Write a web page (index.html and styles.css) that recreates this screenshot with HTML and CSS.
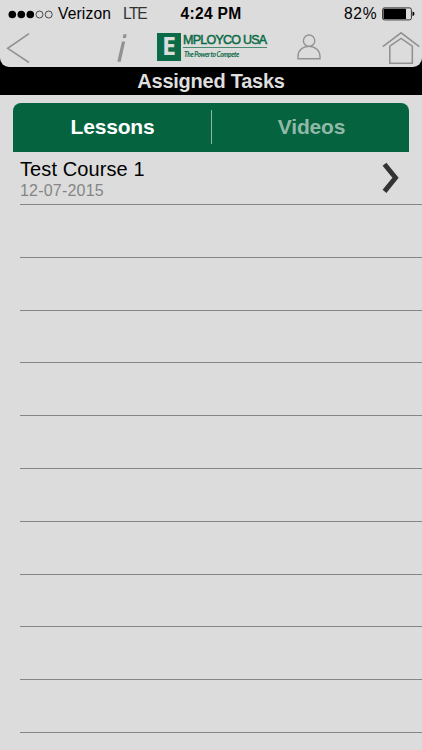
FILE: index.html
```html
<!DOCTYPE html>
<html lang="en">
<head>
<meta charset="utf-8">
<title>Assigned Tasks</title>
<link rel="stylesheet" href="styles.css">
</head>
<body>
<div class="top">
  <header class="head">
    <div class="status">
      <svg class="signal" width="45" height="9" viewBox="0 0 45 9"><g fill="#000"><circle cx="4.3" cy="4.5" r="3.8"/><circle cx="13.3" cy="4.5" r="3.8"/><circle cx="22.3" cy="4.5" r="3.8"/></g><g fill="none" stroke="#222" stroke-width=".8"><circle cx="31.5" cy="4.5" r="3.5"/><circle cx="40.7" cy="4.5" r="3.5"/></g></svg>
      <span class="carrier">Verizon</span>
      <span class="network">LTE</span>
      <span class="time">4:24 PM</span>
      <span class="percent">82%</span>
      <svg class="battery" width="33" height="14" viewBox="0 0 33 14"><rect x=".6" y=".9" width="28.8" height="12" rx="1.8" fill="none" stroke="#222" stroke-width=".9"/><rect x="1.5" y="1.8" width="22.5" height="10.2" rx=".6"/><path d="M30.5 4.4q2 .5 2 2.4t-2 2.4z"/></svg>
    </div>
    <nav class="nav">
      <svg class="back" width="24" height="32" viewBox="0 0 24 32"><path d="M23 1.7 1.7 16.3 23 30.5" fill="none" stroke="#919191" stroke-width="1.6"/></svg>
      <svg class="info" width="11" height="30" viewBox="0 0 11 30"><path d="M6.5.3h3.2L8.9 4.1H5.7zM4.9 7.5h3.3L3.7 27.8H.3z" fill="#929292"/></svg>
      <div class="brand">
        <div class="mark">E</div>
        <div class="words">
          <div class="name">MPLOYCO USA</div>
          <div class="motto">The Power to Compete</div>
        </div>
      </div>
      <svg class="person" width="24" height="28" viewBox="0 0 24 28"><g fill="none" stroke="#929292" stroke-width="1.4"><circle cx="12.1" cy="6.7" r="5.7"/><path d="M1 24.8v-2.4c0-6 4.3-10 10.9-10s11.1 4 11.1 10v2.4z"/></g></svg>
      <svg class="home" width="38" height="34" viewBox="0 0 38 34"><g fill="none" stroke="#929292" stroke-width="1.6"><path d="M.8 15.6 19.1 1.8 37.3 15.6"/><path d="M7.8 15.1 19.1 7.4 30.3 15.1V32.3H7.8z"/></g></svg>
    </nav>
  </header>
  <h1 class="title"><span>Assigned Tasks</span></h1>
</div>
<div class="tabs">
  <div class="tab active"><span class="lessons">Lessons</span></div>
  <div class="tab"><span class="videos">Videos</span></div>
</div>
<main class="list">
  <div class="row">
    <div class="course">
      <div class="course-name">Test Course 1</div>
      <div class="date">12-07-2015</div>
    </div>
    <svg class="chevron" width="18" height="32" viewBox="0 0 18 32"><path d="M2.5 2.2 13.5 15.8 2.5 29.4" fill="none" stroke="#333" stroke-width="4.9"/></svg>
  </div>
  <div class="row"></div>
  <div class="row"></div>
  <div class="row"></div>
  <div class="row"></div>
  <div class="row"></div>
  <div class="row"></div>
  <div class="row"></div>
  <div class="row"></div>
  <div class="row"></div>
  <div class="row"></div>
</main>
</body>
</html>
```
FILE: styles.css
```css
* { box-sizing: border-box; }
body {
  margin: 0;
  height: 750px;
  overflow: hidden;
  background: #dcdcdc;
  font-family: "Liberation Sans", Arial, sans-serif;
  color: #000;
}
svg { display: block; flex: none; }
.top { background: #000; }
.head {
  height: 67px;
  background: #dcdcdc;
  border-radius: 0 0 9px 9px;
}
.status {
  display: flex;
  align-items: center;
  height: 28px;
  padding-left: 8px;
  font-size: 15.6px;
  line-height: 28px;
  white-space: nowrap;
}
.carrier { width: 65px; margin-left: 5px; letter-spacing: .15px; }
.network { width: 57.5px; color: #333; font-size: 15.6px; letter-spacing: -1.4px; }
.time { width: 163.5px; font-weight: bold; letter-spacing: .3px; }
.percent { width: 38px; letter-spacing: .7px; }
.nav {
  display: flex;
  align-items: flex-start;
  height: 39px;
  padding-left: 6px;
}
.back { margin-top: 4px; }
.info { margin: 6px 0 0 87px; }
.brand {
  display: flex;
  width: 111px;
  height: 28px;
  margin: 5px 0 0 29px;
  color: #0b6b46;
}
.mark {
  width: 24px;
  flex: none;
  background: #0b6b46;
  color: #dcdcdc;
  font: bold 25px/25px "Open Sans", sans-serif;
  text-align: center;
}
.words { width: 84px; margin-left: 2px; white-space: nowrap; }
.name {
  height: 15px;
  border-bottom: 1px solid #478b70;
  font-size: 12.5px;
  line-height: 14px;
  letter-spacing: -.75px;
  -webkit-text-stroke: .5px #0b6b46;
}
.motto {
  padding-left: 1px;
  font: italic 700 6.6px/12px Lato, sans-serif;
  letter-spacing: -.4px;
}
.person { margin: 6px 0 0 29px; }
.home { margin: 3px 0 0 60.5px; }
.title {
  height: 28px;
  margin: 0;
  color: #dedede;
  font-size: 20px;
  line-height: 28px;
  letter-spacing: -.25px;
  text-align: center;
}
.tabs {
  display: grid;
  grid-template-columns: 199px 197px;
  width: 396px;
  height: 49px;
  margin: 8px 0 0 13px;
  padding: 7px 0 8px;
  border-radius: 8px 8px 0 0;
  background: #056340;
}
.tab {
  padding-left: 2px;
  color: #91b9a7;
  font-size: 21px;
  font-weight: bold;
  line-height: 33px;
  letter-spacing: -.2px;
  text-align: center;
}
.active { padding-left: 1px; border-right: 1px solid #8db8a5; color: #fff; }
.list { padding-top: .25px; }
.row {
  display: flex;
  justify-content: space-between;
  height: 52.8px;
  margin-left: 20px;
  border-bottom: 1px solid #858585;
}
.course-name { padding-top: 6px; font-size: 20px; line-height: 23px; letter-spacing: .1px; }
.date { color: #858585; font-size: 16px; line-height: 19px; letter-spacing: .2px; }
.chevron { margin: 10px 22px 0 0; }
```
